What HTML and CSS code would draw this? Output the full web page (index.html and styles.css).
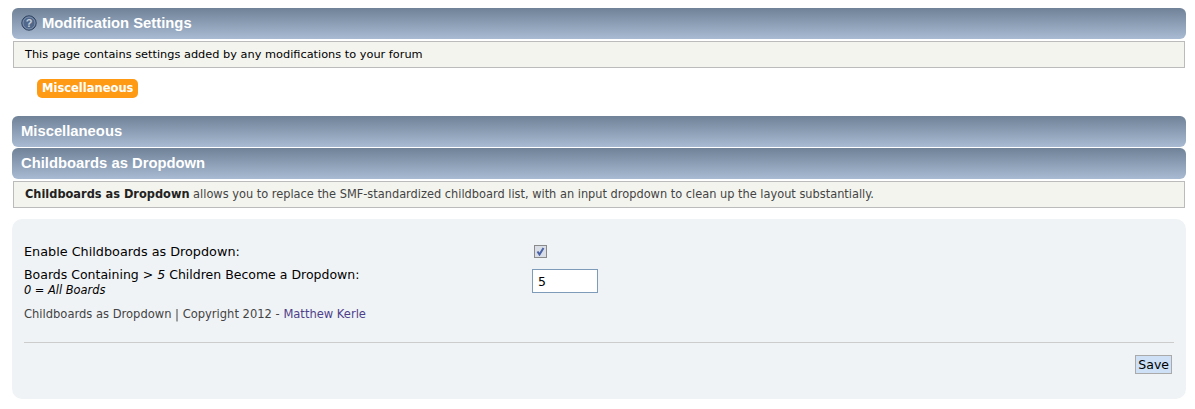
FILE: index.html
```html
<!DOCTYPE html>
<html>
<head>
  <title>Modification Settings</title>
  <meta charset="utf-8">
  <link rel="stylesheet" href="styles.css">
</head>
<body>
  <div class="title-bar">
    <svg class="help-icon" width="16" height="16" viewBox="0 0 16 16">
      <circle cx="8" cy="8" r="7.2" fill="#51688a" stroke="#2f4260" stroke-width="1"/>
      <circle cx="8" cy="8" r="6" fill="none" stroke="#8a9cb8" stroke-width="0.8"/>
      <text x="8" y="12" text-anchor="middle" class="help-mark">?</text>
    </svg>
    Modification Settings
  </div>
  <div class="desc-box">This page contains settings added by any modifications to your forum</div>

  <div class="tabs">
    <a class="tab" href="#">Miscellaneous</a>
  </div>

  <div class="title-bar">Miscellaneous</div>
  <div class="title-bar title-next">Childboards as Dropdown</div>
  <div class="desc-box desc-muted"><strong>Childboards as Dropdown</strong> allows you to replace the SMF-standardized childboard list, with an input dropdown to clean up the layout substantially.</div>

  <div class="panel">
    <div class="setting-row setting-first">
      <div class="setting-label">Enable Childboards as Dropdown:</div>
      <div class="setting-field"><span class="check-box"><svg width="9" height="9" viewBox="0 0 9 9"><path d="M1.5 4.5 L3.5 7.5 L7.5 1" fill="none" stroke="#4a62a8" stroke-width="2"/></svg></span></div>
    </div>
    <div class="setting-row">
      <div class="setting-label setting-tall">
        Boards Containing &gt; <em>5</em> Children Become a Dropdown:
        <div class="setting-hint">0 = All Boards</div>
      </div>
      <div class="setting-field"><input type="text" class="num-input" value="5"></div>
    </div>
    <div class="credit">Childboards as Dropdown | Copyright 2012 - <a href="#">Matthew Kerle</a></div>
    <hr class="divider">
    <div class="actions"><button class="save-btn">Save</button></div>
  </div>
</body>
</html>
```

FILE: styles.css
```css
body {
  margin: 0;
  padding: 8px 9px 0 12px;
  background: #fff;
  font-family: "DejaVu Sans", Verdana, sans-serif;
  font-size: 11.34px;
  color: #000;
}
.title-bar {
  display: flex;
  align-items: center;
  gap: 5px;
  height: 31px;
  box-sizing: border-box;
  padding: 0 9px 2px;
  border-radius: 6px;
  background: linear-gradient(#6f8298, #a9bbd2);
  color: #fff;
  font-family: "Liberation Sans", Arial, sans-serif;
  font-size: 14.8px;
  font-weight: bold;
}
.title-next {
  margin-top: 1px;
}
.help-icon {
  flex: none;
}
.help-mark {
  fill: #c5cfdd;
  font-size: 11px;
  font-weight: bold;
}
.desc-box {
  margin: 2px 1px 0;
  height: 27px;
  box-sizing: border-box;
  padding: 0 11px;
  line-height: 25px;
  background: #f3f4ee;
  border: 1px solid #bbb;
  color: #000;
}
.desc-muted {
  font-size: 11.38px;
  color: #444;
}
.desc-muted strong {
  color: #222;
}
.tabs {
  padding: 11px 0 18px 25px;
  display: flex;
}
.tab {
  display: block;
  height: 19px;
  line-height: 19px;
  padding: 0 5px;
  background: #fe9a13;
  border-radius: 5px;
  color: #fff;
  font-size: 11.5px;
  font-weight: bold;
  text-decoration: none;
}
.panel {
  margin-top: 11px;
  height: 180px;
  box-sizing: border-box;
  padding: 24px 12px 0 12px;
  background: #f0f3f6;
  border-radius: 10px;
}
.setting-row {
  display: flex;
  font-size: 12.5px;
  margin-top: 9px;
}
.setting-first {
  margin-top: 0;
  height: 17px;
  align-items: center;
  font-size: 12.8px;
}
.setting-label {
  width: 508px;
  line-height: 13px;
}
.setting-tall {
  margin-top: -1px;
}
.setting-hint {
  margin-top: 3px;
  font-size: 11.4px;
  font-style: italic;
}
.check-box {
  display: flex;
  align-items: center;
  justify-content: center;
  width: 13px;
  height: 13px;
  box-sizing: border-box;
  margin-left: 2px;
  border: 1px solid #8a8a8a;
  background: #d9dde6;
}
.num-input {
  display: block;
  width: 66px;
  height: 24px;
  box-sizing: border-box;
  padding: 0 5px;
  border: 1px solid #7e9cba;
  background: #fff;
  font-family: "DejaVu Sans", Verdana, sans-serif;
  font-size: 12.5px;
}
.credit {
  margin-top: 10px;
  font-size: 11.52px;
  color: #444;
}
.credit a {
  color: #4f3f8a;
  text-decoration: none;
}
.divider {
  margin: 21px 0 0;
  border: 0;
  border-top: 1px solid #ccc;
}
.actions {
  display: flex;
  justify-content: flex-end;
  margin-top: 12px;
  padding-right: 2px;
}
.save-btn {
  height: 19px;
  padding: 0 2px;
  box-sizing: border-box;
  border: 1px solid #aaa;
  background: #cde0f5;
  font-family: "DejaVu Sans", Verdana, sans-serif;
  font-size: 12.5px;
  color: #000;
}
```
